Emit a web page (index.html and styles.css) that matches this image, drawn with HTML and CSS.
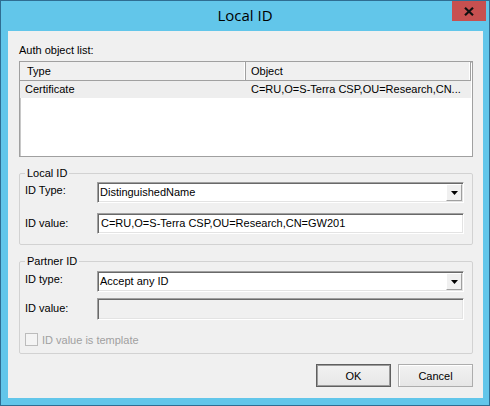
FILE: index.html
```html
<!DOCTYPE html>
<html lang="en">
<head>
    <meta charset="UTF-8">
    <title>Local ID</title>
    <link rel="stylesheet" href="styles.css">
</head>
<body>
    <div class="window">
        <div class="titlebar">
            <span class="title">Local ID</span>
            <button class="close-button">
                <svg width="10" height="9" viewBox="0 0 10 9"><path d="M1 0.8L9 8.2M9 0.8L1 8.2" stroke="#111" stroke-width="2.2"/></svg>
            </button>
        </div>

        <div class="client">
            <div class="caption">Auth object list:</div>
            <div class="listview">
                <div class="lv-header">
                    <div class="lv-col col-type">Type</div>
                    <div class="lv-col col-object">Object</div>
                </div>
                <div class="lv-row">
                    <div class="lv-col col-type">Certificate</div>
                    <div class="lv-col col-object">C=RU,O=S-Terra CSP,OU=Research,CN...</div>
                </div>
            </div>

            <fieldset class="group group-local">
                <legend>Local ID</legend>
                <div class="field-row">
                    <label class="field-label">ID Type:</label>
                    <div class="combo">
                        <span class="combo-text">DistinguishedName</span>
                        <span class="combo-button">
                            <svg width="7" height="4" viewBox="0 0 7 4"><path d="M0 0H7L3.5 4Z" fill="#000"/></svg>
                        </span>
                    </div>
                </div>
                <div class="field-row">
                    <label class="field-label label-input">ID value:</label>
                    <div class="textbox">C=RU,O=S-Terra CSP,OU=Research,CN=GW201</div>
                </div>
            </fieldset>

            <fieldset class="group group-partner">
                <legend>Partner ID</legend>
                <div class="field-row">
                    <label class="field-label">ID type:</label>
                    <div class="combo">
                        <span class="combo-text">Accept any ID</span>
                        <span class="combo-button">
                            <svg width="7" height="4" viewBox="0 0 7 4"><path d="M0 0H7L3.5 4Z" fill="#000"/></svg>
                        </span>
                    </div>
                </div>
                <div class="field-row">
                    <label class="field-label label-input">ID value:</label>
                    <div class="textbox disabled"></div>
                </div>
                <div class="check-row">
                    <span class="checkbox"></span>
                    <span class="check-label">ID value is template</span>
                </div>
            </fieldset>

            <div class="buttons">
                <button class="btn btn-default">OK</button>
                <button class="btn">Cancel</button>
            </div>
        </div>
    </div>
</body>
</html>
```

FILE: styles.css
```css
* {
    box-sizing: border-box;
}

html, body {
    margin: 0;
    padding: 0;
}

body {
    width: 490px;
    height: 406px;
    overflow: hidden;
    font-family: "Liberation Sans", Arial, sans-serif;
    font-size: 11px;
    color: #000;
}

.window {
    width: 490px;
    height: 406px;
    background-color: #62c6ea;
    border: 1px solid #2f6d92;
    display: flex;
    flex-direction: column;
}

/* Barra de titulo */
.titlebar {
    height: 30px;
    flex-shrink: 0;
    display: grid;
    grid-template-columns: 1fr auto 1fr;
    align-items: start;
}

.title {
    grid-column: 2;
    font-family: "Open Sans", "Noto Sans", sans-serif;
    font-size: 15px;
    line-height: 28px;
    color: #000;
}

.close-button {
    grid-column: 3;
    justify-self: end;
    width: 34px;
    height: 20px;
    margin-right: 3px;
    padding: 0;
    border: none;
    background-color: #c75050;
    display: flex;
    align-items: center;
    justify-content: center;
}

.client {
    flex: 1;
    margin: 0 6px 7px 7px;
    padding: 13px 10px 0 11px;
    background-color: #f0f0f0;
}

.caption {
    line-height: 13px;
    margin-bottom: 4px;
}

/* Lista */
.listview {
    height: 96px;
    background-color: #fff;
    border: 1px solid #a0a0a0;
    box-shadow: inset 1px 1px 0 #c8c8c8;
}

.lv-header {
    display: flex;
    height: 19px;
    width: 451px;
    background-color: #f0f0f0;
    border-bottom: 1px solid #a0a0a0;
}

.lv-header .lv-col {
    line-height: 18px;
    border-right: 1px solid #a0a0a0;
    box-shadow: inset -1px 0 0 #fff;
}

.lv-header .col-type {
    padding-left: 7px;
}

.lv-col {
    white-space: nowrap;
    overflow: hidden;
}

.col-type {
    width: 226px;
    padding-left: 5px;
}

.col-object {
    width: 225px;
    padding-left: 5px;
}

.lv-row {
    display: flex;
    width: 451px;
    height: 17px;
    line-height: 17px;
    background-color: #eeeeee;
}

/* Grupos */
.group {
    margin: 9px 0 0;
    border: 1px solid #d2d2d2;
    border-radius: 2px;
    min-width: 0;
}

.group legend {
    padding: 0 2px;
    line-height: 14px;
}

.group-local {
    padding: 2px 8px 10px 5px;
}

.group-local .field-row + .field-row {
    margin-top: 10px;
}

.group-partner {
    padding: 3px 8px 7px 5px;
}

.group-partner .field-row + .field-row {
    margin-top: 6px;
}

.field-row {
    display: flex;
    align-items: flex-start;
}

.field-label {
    width: 72px;
    flex-shrink: 0;
    line-height: 13px;
    margin-top: 2px;
}

.field-label.label-input {
    margin-top: 4px;
}

.combo {
    flex: 1;
    height: 21px;
    display: flex;
    padding: 1px;
    background-color: #fff;
    border: 1px solid;
    border-color: #a0a0a0 #fff #fff #a0a0a0;
    box-shadow: inset 1px 1px 0 #696969, inset -1px -1px 0 #e3e3e3;
}

.combo-text {
    flex: 1;
    padding-left: 1px;
    line-height: 17px;
}

.combo-button {
    width: 16px;
    display: flex;
    align-items: center;
    justify-content: center;
    padding-top: 1px;
    background-color: #f0f0f0;
    border: 1px solid;
    border-color: #fff #a0a0a0 #a0a0a0 #fff;
}

.textbox {
    flex: 1;
    height: 21px;
    padding-left: 3px;
    line-height: 19px;
    background-color: #fff;
    border: 1px solid;
    border-color: #a0a0a0 #fff #fff #a0a0a0;
    box-shadow: inset 1px 1px 0 #696969, inset -1px -1px 0 #e3e3e3;
}

.textbox.disabled {
    background-color: #f0f0f0;
    height: 22px;
}

.check-row {
    display: flex;
    align-items: center;
    margin-top: 13px;
    height: 13px;
}

.checkbox {
    width: 13px;
    height: 13px;
    border: 1px solid #bcbcbc;
    background-color: #f4f4f4;
}

.check-label {
    margin-left: 4px;
    color: #a0a0a0;
}

/* Botones */
.buttons {
    display: flex;
    justify-content: flex-end;
    gap: 7px;
    margin-top: 10px;
}

.btn {
    width: 75px;
    height: 23px;
    padding: 0;
    font-family: "Liberation Sans", Arial, sans-serif;
    font-size: 11px;
    color: #000;
    background: linear-gradient(#f2f2f2, #e6e6e6);
    border: 1px solid #adadad;
    box-shadow: inset 1px 1px 0 #fff;
}

.btn-default {
    border-color: #5f5f5f;
    box-shadow: inset 0 0 0 1px #9c9c9c;
}
```
